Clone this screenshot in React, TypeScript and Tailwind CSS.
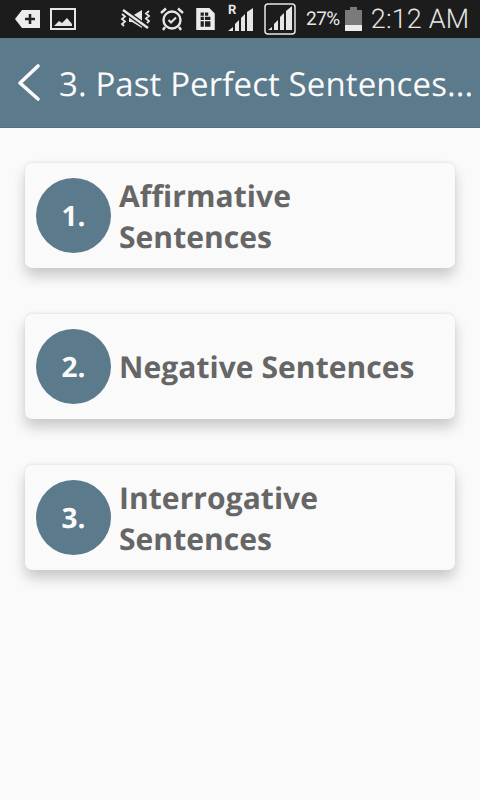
function StatusBar() {
  return (
    <div className="h-[38px] bg-[#1c1c1c] flex items-center text-[#e6e6e6] font-['Roboto',sans-serif]">
      <svg width="26" height="20" viewBox="0 0 26 20" className="ml-[14px] shrink-0">
        <path d="M1 10 L8 1 H26 V19 H8 Z" fill="#ececec" />
        <path d="M11 10h10M16 5v10" stroke="#222" strokeWidth="2.6" fill="none" />
      </svg>
      <svg width="26" height="22" viewBox="0 0 26 22" className="ml-[10px] shrink-0">
        <rect x="1" y="1" width="24" height="20" fill="none" stroke="#e6e6e6" strokeWidth="2" />
        <path d="M4 18 L9 13 L12 15 L17 10 L22 16 V18 Z" fill="#e6e6e6" />
      </svg>
      <svg width="32" height="22" viewBox="0 0 32 22" className="ml-[44px] shrink-0">
        <path d="M9 8 H12 L22 2 V20 L12 14 H9 Z" fill="#e6e6e6" />
        <path d="M3 2 L28 20" stroke="#1c1c1c" strokeWidth="5" />
        <path d="M3 2 L28 20" stroke="#e6e6e6" strokeWidth="2.500" />
        <path d="M2 6l3 2.500-3 2.500 3 2.500-3 2.500 2 2M29 3l-3 2.500 3 2.500-3 2.500 3 2.500-2 2" stroke="#e6e6e6" strokeWidth="1.800" fill="none" />
      </svg>
      <svg width="26" height="26" viewBox="0 0 26 26" className="ml-[7px] shrink-0">
        <circle cx="13" cy="14" r="8.500" fill="none" stroke="#e6e6e6" strokeWidth="2.400" />
        <path d="M9.500 14 L12 16.500 L17 11.500" fill="none" stroke="#e6e6e6" strokeWidth="2" />
        <path d="M2 7 L7 2.500M24 7 L19 2.500M6 21 L4 24M20 21 L22 24" stroke="#e6e6e6" strokeWidth="2.400" />
      </svg>
      <svg width="21" height="24" viewBox="0 0 19 22" className="ml-[10px] shrink-0">
        <path d="M1 1 H13 L18 6 V21 H1 Z" fill="#ececec" />
        <path d="M5 5h3v3h-3zM9 5h3v3h-3zM5 9h3v3h-3zM9 9h5v3h-5zM5 13h3v5h-3zM9 13h5v5h-5z" fill="#222" />
      </svg>
      <div className="relative w-[28px] h-[30px] ml-[11px] shrink-0">
        <span className="absolute left-[1px] top-0 text-[13px] leading-[14px] font-bold">R</span>
        <svg width="28" height="30" viewBox="0 0 28 30" className="absolute left-0 top-0">
          <path d="M1 27 L6 23 V27 Z M8 27 V20 L12 16 V27 Z M14 27 V14 L18 10 V27 Z M20 27 V8 L26 4 V27 Z" fill="#e6e6e6" />
        </svg>
      </div>
      <svg width="33" height="32" viewBox="0 0 33 32" className="ml-[9px] shrink-0">
        <rect x="1" y="1" width="30" height="30" rx="3" fill="none" stroke="#e6e6e6" strokeWidth="1.500" />
        <path d="M4 27 L8 24 V27 Z M10 27 V21 L14 17 V27 Z M16 27 V14 L20 10 V27 Z M22 27 V8 L28 3 V27 Z" fill="#e6e6e6" />
      </svg>
      <span className="ml-[9px] text-[19px] tracking-[-0.5px] shrink-0">27%</span>
      <div className="ml-[5px] w-[17px] h-[21px] mt-[3px] bg-[#7a7a7a] relative flex flex-col justify-end shrink-0">
        <div className="h-[6px] bg-[#ececec]" />
        <div className="absolute -top-[3px] left-[5px] w-[7px] h-[3px] bg-[#7a7a7a]" />
      </div>
      <span className="ml-[9px] text-[27px] leading-none tracking-[0.15px] font-light whitespace-nowrap shrink-0">2:12 AM</span>
    </div>
  );
}

function Row({ n, label }: { n: string; label: string }) {
  return (
    <div className="h-[105px] mx-[25px] rounded-[7px] bg-[#fafafa] flex items-center pl-[11px] shadow-[0_8px_14px_rgba(0,0,0,0.2),0_-1px_3px_rgba(0,0,0,0.07)]">
      <div className="w-[75px] h-[75px] rounded-full bg-[#5b7a8c] shrink-0 flex items-center justify-center text-[#fafafa] text-[28px] font-bold">
        {n}
      </div>
      <div className="ml-[8px] text-[#666666] text-[30px] tracking-[0.06px] leading-[41px] font-bold pr-[20px]">{label}</div>
    </div>
  );
}

export default function App() {
  return (
    <div className="w-[480px] h-[800px] bg-[#fafafa] font-['Open_Sans',sans-serif] [text-rendering:geometricPrecision] overflow-hidden">
      <StatusBar />
      <div className="h-[90px] bg-[#5b7a8c] flex items-center border-b border-[#54707f] text-[#fafafa]">
        <svg width="30" height="44" viewBox="0 0 30 44" className="ml-[15px] shrink-0">
          <path d="M23 5 L5 22 L23 38" fill="none" stroke="#fafafa" strokeWidth="3.600" strokeLinecap="round" strokeLinejoin="round" />
        </svg>
        <div className="ml-[14px] pt-[2px] text-[33px] tracking-[0.1px] font-medium whitespace-nowrap">3. Past Perfect Sentences...</div>
      </div>
      <div className="pt-[35px] flex flex-col gap-[46px]">
        <Row n="1." label="Affirmative Sentences" />
        <Row n="2." label="Negative Sentences" />
        <Row n="3." label="Interrogative Sentences" />
      </div>
    </div>
  );
}
